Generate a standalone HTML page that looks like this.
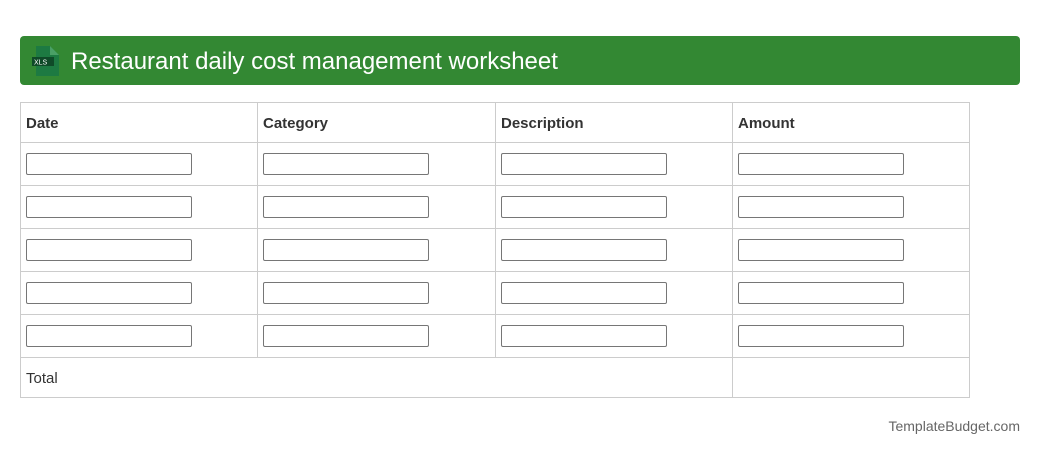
<!DOCTYPE html>
<html><head><style>
body{margin:0;background:#fff;font-family:"Liberation Sans",Arial,sans-serif;width:1040px;height:455px;position:relative;overflow:hidden}
.hdr{position:absolute;left:20px;top:36px;width:1000px;height:49px;background:#338833;border-radius:4px}
.hdr .t{position:absolute;left:51px;top:11px;font-size:24px;color:#fff;line-height:29px}
.ic{position:absolute;left:11px;top:10px}
table{position:absolute;left:20px;top:102px;border-collapse:collapse}
td,th{border:1px solid #ccc;padding:2px 5px 0;text-align:left;font-size:15px;color:#333;box-sizing:border-box}
th{height:40px;font-weight:bold}
td{height:43px;padding-top:0}
.in{width:166px;height:22px;border:1px solid #767676;border-radius:2px;box-sizing:border-box}
.tot td{height:40px;padding-top:2px}
.f{position:absolute;right:20px;top:418px;font-size:14px;color:#666}
</style></head><body>
<div class="hdr">
<svg class="ic" width="30" height="30" viewBox="0 0 30 30"><path d="M5 0H19L28 9V30H5Z" fill="#1d7a42"/><path d="M19 0V9H28Z" fill="#4aa066"/><rect x="1" y="11" width="22" height="9" fill="#0f4a28"/><text x="3" y="18.5" font-size="7" fill="#fff" font-family="Liberation Sans">XLS</text></svg>
<div class="t">Restaurant daily cost management worksheet</div></div>
<table>
<tr><th style="width:237px">Date</th><th style="width:238px">Category</th><th style="width:237px">Description</th><th style="width:237px">Amount</th></tr>
<tr><td><div class="in"></div></td><td><div class="in"></div></td><td><div class="in"></div></td><td><div class="in"></div></td></tr>
<tr><td><div class="in"></div></td><td><div class="in"></div></td><td><div class="in"></div></td><td><div class="in"></div></td></tr>
<tr><td><div class="in"></div></td><td><div class="in"></div></td><td><div class="in"></div></td><td><div class="in"></div></td></tr>
<tr><td><div class="in"></div></td><td><div class="in"></div></td><td><div class="in"></div></td><td><div class="in"></div></td></tr>
<tr><td><div class="in"></div></td><td><div class="in"></div></td><td><div class="in"></div></td><td><div class="in"></div></td></tr>
<tr class="tot"><td colspan="3">Total</td><td></td></tr>
</table>
<div class="f">TemplateBudget.com</div>
</body></html>
